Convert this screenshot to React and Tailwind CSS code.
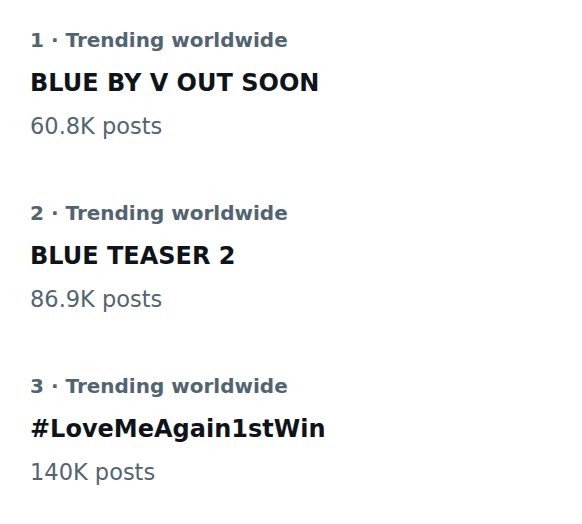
export default function App() {
  const items = [
    { n: 1, title: "BLUE BY V OUT SOON", posts: "60.8K posts" },
    { n: 2, title: "BLUE TEASER 2", posts: "86.9K posts" },
    { n: 3, title: "#LoveMeAgain1stWin", posts: "140K posts" },
  ];
  return (
    <div className="w-[582px] h-[524px] bg-white pl-[30px] pt-[19px] flex flex-col gap-[44px]" style={{ fontFamily: "'DejaVu Sans', sans-serif" }}>
      {items.map((it) => (
        <div key={it.n} className="flex flex-col">
          <div className="text-[20px] leading-[43px] font-bold text-[#536471]">{it.n} · Trending worldwide</div>
          <div className="text-[24px] leading-[43px] font-bold text-[#0f1419]">{it.title}</div>
          <div className="text-[22.5px] leading-[43px] text-[#536471]">{it.posts}</div>
        </div>
      ))}
    </div>
  );
}
